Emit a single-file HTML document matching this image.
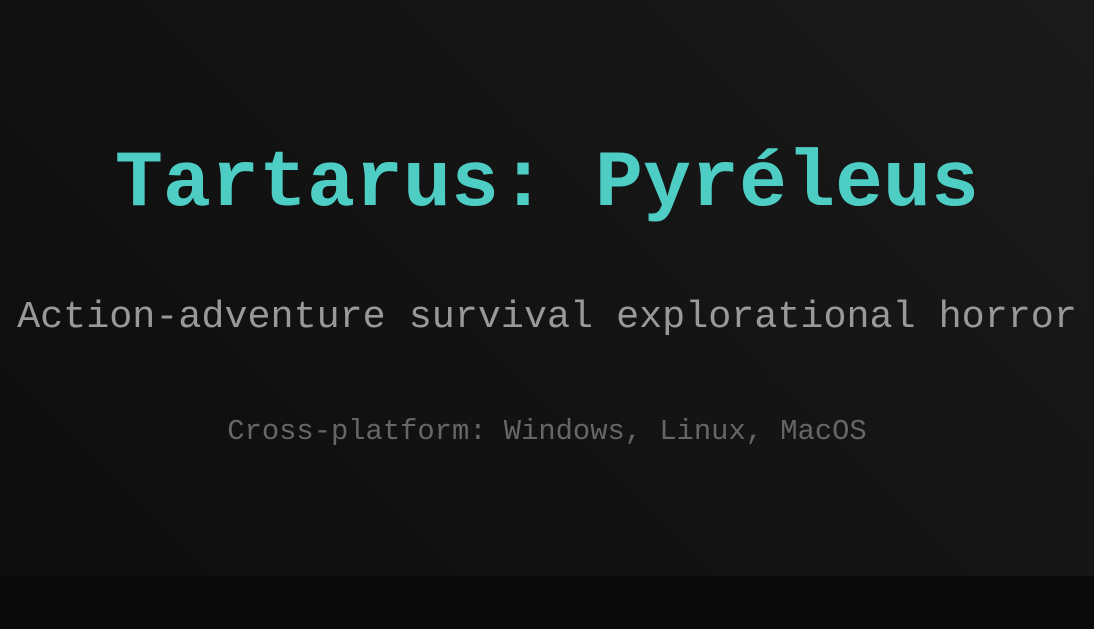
<!DOCTYPE html>
<html><head><meta charset="utf-8"><style>
html,body{margin:0;padding:0;width:1094px;height:629px;overflow:hidden;background:#0a0a0a;}
.hero{position:absolute;left:0;top:0;width:1094px;height:576px;background:linear-gradient(45deg,#0d0d0d 0%,#1a1a1a 100%);font-family:"Liberation Mono",monospace;}
.t{position:absolute;left:0;width:1094px;text-align:center;white-space:nowrap;}
h1{margin:0;top:135px;font-size:80px;font-weight:bold;color:#4ecdc4;line-height:100px;}
.s{top:292px;font-size:38.4px;color:#999;line-height:50px;}
.p{top:412px;font-size:28.8px;color:#666;line-height:40px;}
.foot{position:absolute;left:0;top:576px;width:1094px;height:53px;background:#0a0a0a;}
</style></head><body>
<div class="hero">
<h1 class="t">Tartarus: Pyréleus</h1>
<div class="t s">Action-adventure survival explorational horror</div>
<div class="t p">Cross-platform: Windows, Linux, MacOS</div>
</div>
<div class="foot"></div>
</body></html>
